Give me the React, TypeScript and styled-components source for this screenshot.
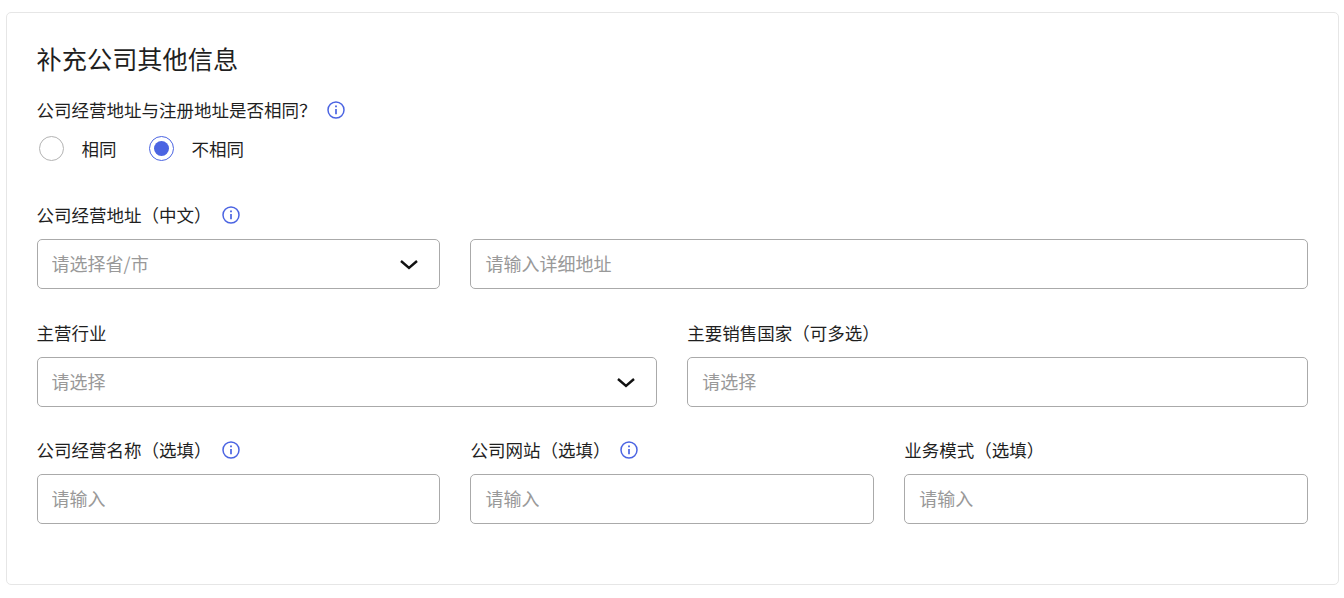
import React, { useState } from 'react';
import styled, { createGlobalStyle } from 'styled-components';

const GlobalStyle = createGlobalStyle`
  html, body {
    margin: 0;
    background: #fff;
    font-family: "Noto Sans CJK SC", "Liberation Sans", sans-serif;
    color: #1f1f1f;
  }
`;

const Card = styled.section`
  box-sizing: border-box;
  margin: 12px 5px 14px 6px;
  height: 573px;
  padding: 27px 30px 0 29.6px;
  border: 1px solid #e6e6e6;
  border-radius: 5px;
`;

const Title = styled.h2`
  margin: 0;
  height: 36px;
  font-size: 25.2px;
  line-height: 36px;
  font-weight: 400;
`;

const Label = styled.label`
  display: flex;
  align-items: center;
  gap: 10px;
  height: 24px;
  font-size: 17.5px;
  line-height: 24px;
`;

const QuestionLabel = styled(Label)`
  margin-top: 22px;
`;

const InfoGlyph = styled.svg`
  width: 18px;
  height: 18px;
  flex: none;
  color: #4b64e2;
`;

const RadioRow = styled.div`
  display: flex;
  align-items: center;
  height: 28px;
  margin-top: 12px;
  padding-left: 2px;
`;

const RadioOption = styled.button`
  display: flex;
  align-items: center;
  gap: 18px;
  margin-right: 32px;
  padding: 0;
  border: 0;
  background: none;
  font: inherit;
  font-size: 17.5px;
  color: inherit;
  cursor: pointer;
`;

const RadioDot = styled.span<{ $checked: boolean }>`
  box-sizing: border-box;
  display: flex;
  align-items: center;
  justify-content: center;
  width: 25px;
  height: 25px;
  border-radius: 50%;
  border: 1px solid ${(p) => (p.$checked ? '#4b64e2' : '#b3b3b3')};

  &::after {
    content: '';
    display: ${(p) => (p.$checked ? 'block' : 'none')};
    width: 15px;
    height: 15px;
    border-radius: 50%;
    background: #4b64e2;
  }
`;

const FormGrid = styled.div`
  display: grid;
  grid-template-columns: repeat(6, 1fr);
  column-gap: 30px;
  row-gap: 31.5px;
  margin-top: 41px;
`;

const Field = styled.div<{ $span: number }>`
  grid-column: span ${(p) => p.$span};
  min-width: 0;
`;

const Control = styled.div`
  position: relative;
  margin-top: 12px;
`;

const TextInput = styled.input`
  box-sizing: border-box;
  display: block;
  width: 100%;
  height: 50px;
  padding: 0 14px 2px;
  border: 1px solid #aaa;
  border-radius: 5px;
  outline: none;
  background: #fff;
  font: inherit;
  font-size: 18px;

  &::placeholder {
    color: #999;
    opacity: 1;
  }
`;

const Chevron = styled.svg`
  position: absolute;
  top: 50%;
  right: 21px;
  width: 20px;
  height: 11px;
  margin-top: -5px;
  color: #111;
  pointer-events: none;
`;

const InfoIcon = () => (
  <InfoGlyph viewBox="0 0 18 18" fill="none" stroke="currentColor">
    <circle cx="9" cy="9" r="8" strokeWidth="1.5" />
    <path d="M9 8v5.2" strokeWidth="1.7" />
    <path d="M9 4.4v1.9" strokeWidth="1.8" />
  </InfoGlyph>
);

type FieldDef = {
  label: string;
  placeholder: string;
  span: number;
  info?: boolean;
  select?: boolean;
};

const fields: FieldDef[] = [
  { label: '公司经营地址（中文）', placeholder: '请选择省/市', span: 2, info: true, select: true },
  { label: '', placeholder: '请输入详细地址', span: 4 },
  { label: '主营行业', placeholder: '请选择', span: 3, select: true },
  { label: '主要销售国家（可多选）', placeholder: '请选择', span: 3 },
  { label: '公司经营名称（选填）', placeholder: '请输入', span: 2, info: true },
  { label: '公司网站（选填）', placeholder: '请输入', span: 2, info: true },
  { label: '业务模式（选填）', placeholder: '请输入', span: 2 },
];

const App = () => {
  const [same, setSame] = useState(false);

  return (
    <>
      <GlobalStyle />
      <Card>
        <Title>补充公司其他信息</Title>
        <QuestionLabel>
          公司经营地址与注册地址是否相同？
          <InfoIcon />
        </QuestionLabel>
        <RadioRow>
          <RadioOption type="button" onClick={() => setSame(true)}>
            <RadioDot $checked={same} />
            相同
          </RadioOption>
          <RadioOption type="button" onClick={() => setSame(false)}>
            <RadioDot $checked={!same} />
            不相同
          </RadioOption>
        </RadioRow>
        <FormGrid>
          {fields.map((f) => (
            <Field key={f.placeholder + f.label} $span={f.span}>
              <Label>
                {f.label}
                {f.info && <InfoIcon />}
              </Label>
              <Control>
                <TextInput placeholder={f.placeholder} />
                {f.select && (
                  <Chevron viewBox="0 0 20 11" fill="none" stroke="currentColor" strokeWidth="2.4">
                    <path d="M2 2l8 7 8-7" />
                  </Chevron>
                )}
              </Control>
            </Field>
          ))}
        </FormGrid>
      </Card>
    </>
  );
};

export default App;
